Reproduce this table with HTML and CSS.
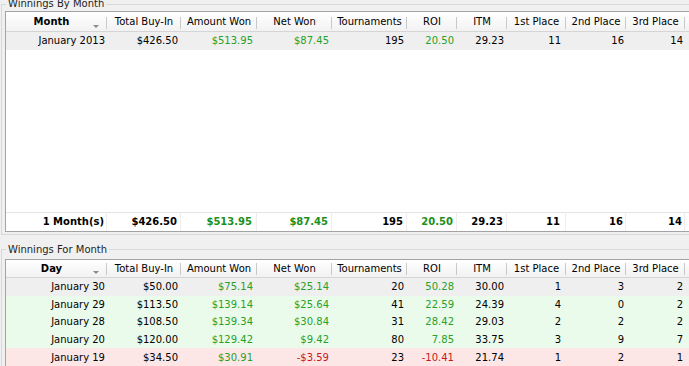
FILE: index.html
```html
<!DOCTYPE html>
<html>
<head>
<meta charset="utf-8">
<link rel="stylesheet" href="styles.css">
</head>
<body>
<div class="page">
  <section class="group g1">
    <div class="caption">Winnings By Month</div>
    <div class="grid">
      <table>
        <colgroup>
          <col class="c1"><col class="c2"><col class="c3"><col class="c4"><col class="c5"><col class="c6"><col class="c7"><col class="c8"><col class="c9"><col class="c10"><col class="c11">
        </colgroup>
        <thead>
          <tr>
            <th class="sorted"><span class="arrow"></span>Month</th>
            <th>Total Buy-In</th><th>Amount Won</th><th>Net Won</th><th>Tournaments</th><th>ROI</th><th>ITM</th><th>1st Place</th><th>2nd Place</th><th>3rd Place</th><th class="last"></th>
          </tr>
        </thead>
        <tbody>
          <tr class="row focus">
            <td class="p1">January 2013</td><td class="p2">$426.50</td><td class="p3 pos">$513.95</td><td class="p4 pos">$87.45</td><td class="p5">195</td><td class="p6 pos">20.50</td><td class="p7">29.23</td><td class="p8">11</td><td class="p9">16</td><td class="p10">14</td><td></td>
          </tr>
          <tr class="filler"><td colspan="11"></td></tr>
        </tbody>
        <tfoot>
          <tr class="total">
            <td class="p1">1 Month(s)</td><td class="p2">$426.50</td><td class="p3 pos">$513.95</td><td class="p4 pos">$87.45</td><td class="p5">195</td><td class="p6 pos">20.50</td><td class="p7">29.23</td><td class="p8">11</td><td class="p9">16</td><td class="p10">14</td><td></td>
          </tr>
        </tfoot>
      </table>
    </div>
  </section>

  <section class="group g2">
    <div class="caption">Winnings For Month</div>
    <div class="grid">
      <table>
        <colgroup>
          <col class="c1"><col class="c2"><col class="c3"><col class="c4"><col class="c5"><col class="c6"><col class="c7"><col class="c8"><col class="c9"><col class="c10"><col class="c11">
        </colgroup>
        <thead>
          <tr>
            <th class="sorted"><span class="arrow"></span>Day</th>
            <th>Total Buy-In</th><th>Amount Won</th><th>Net Won</th><th>Tournaments</th><th>ROI</th><th>ITM</th><th>1st Place</th><th>2nd Place</th><th>3rd Place</th><th class="last"></th>
          </tr>
        </thead>
        <tbody>
          <tr class="row focus">
            <td class="p1">January 30</td><td class="p2">$50.00</td><td class="p3 pos">$75.14</td><td class="p4 pos">$25.14</td><td class="p5">20</td><td class="p6 pos">50.28</td><td class="p7">30.00</td><td class="p8">1</td><td class="p9">3</td><td class="p10">2</td><td></td>
          </tr>
          <tr class="row win">
            <td class="p1">January 29</td><td class="p2">$113.50</td><td class="p3 pos">$139.14</td><td class="p4 pos">$25.64</td><td class="p5">41</td><td class="p6 pos">22.59</td><td class="p7">24.39</td><td class="p8">4</td><td class="p9">0</td><td class="p10">2</td><td></td>
          </tr>
          <tr class="row win">
            <td class="p1">January 28</td><td class="p2">$108.50</td><td class="p3 pos">$139.34</td><td class="p4 pos">$30.84</td><td class="p5">31</td><td class="p6 pos">28.42</td><td class="p7">29.03</td><td class="p8">2</td><td class="p9">2</td><td class="p10">2</td><td></td>
          </tr>
          <tr class="row win">
            <td class="p1">January 20</td><td class="p2">$120.00</td><td class="p3 pos">$129.42</td><td class="p4 pos">$9.42</td><td class="p5">80</td><td class="p6 pos">7.85</td><td class="p7">33.75</td><td class="p8">3</td><td class="p9">9</td><td class="p10">7</td><td></td>
          </tr>
          <tr class="row loss">
            <td class="p1">January 19</td><td class="p2">$34.50</td><td class="p3 pos">$30.91</td><td class="p4 neg">-$3.59</td><td class="p5">23</td><td class="p6 neg">-10.41</td><td class="p7">21.74</td><td class="p8">1</td><td class="p9">2</td><td class="p10">1</td><td></td>
          </tr>
        </tbody>
      </table>
    </div>
  </section>
</div>
</body>
</html>
```

FILE: styles.css
```css
html, body {
  margin: 0;
  padding: 0;
}
body {
  background: #f0f0f0;
  font-family: "DejaVu Sans", Tahoma, sans-serif;
  font-size: 10px;
  color: #000;
  width: 689px;
  height: 366px;
  overflow: hidden;
}
.page {
  display: flex;
  flex-direction: column;
  padding-top: 4px;
}
.group {
  position: relative;
  margin-left: 1px;
  border-top: 1px solid #d9d9d9;
  border-left: 1px solid #d9d9d9;
}
.g1 {
  height: 229px;
  border-bottom: 1px solid #d9d9d9;
}
.g2 {
  margin-top: 14px;
  flex: 1;
}
.caption {
  position: absolute;
  left: 4px;
  top: -8px;
  padding: 0 2px;
  line-height: 13px;
  background: #f0f0f0;
  color: #1e1e1e;
}
.g2 .caption {
  top: -7px;
}
.grid {
  margin-left: 3px;
  width: 720px;
  border: 1px solid #a3a3a3;
  border-right: none;
  background: #fff;
}
.g1 .grid {
  margin-top: 6px;
}
.g2 .grid {
  margin-top: 9px;
}
table {
  border-collapse: separate;
  border-spacing: 0;
  table-layout: fixed;
  width: 720px;
}
.c1 { width: 101px; }
.c2 { width: 74px; }
.c3 { width: 76px; }
.c4 { width: 75px; }
.c5 { width: 75px; }
.c6 { width: 50px; }
.c7 { width: 50px; }
.c8 { width: 59px; }
.c9 { width: 60px; }
.c10 { width: 59px; }
.c11 { width: 41px; }

th {
  height: 19px;
  padding: 0;
  font-weight: normal;
  text-align: center;
  white-space: nowrap;
  overflow: hidden;
  border-bottom: 1px solid #d5d5d5;
  background:
    linear-gradient(#c9c9c9, #c9c9c9) no-repeat right 5px / 1px 12px,
    linear-gradient(#ffffff, #f2f2f2);
}
.g2 th {
  height: 17px;
  background:
    linear-gradient(#c9c9c9, #c9c9c9) no-repeat right 3px / 1px 12px,
    linear-gradient(#ffffff, #f2f2f2);
}
.g2 th.last,
th.last {
  background: linear-gradient(#ffffff, #f2f2f2);
}
th.sorted {
  font-weight: bold;
  padding-left: 4px;
}
.arrow {
  float: right;
  width: 0;
  height: 0;
  margin: 9px 8px 0 0;
  border-top: 3px solid #8a8a8a;
  border-left: 3px solid transparent;
  border-right: 3px solid transparent;
}
.g2 .arrow {
  margin-top: 8px;
}
td {
  padding: 0;
  text-align: right;
  white-space: nowrap;
  overflow: hidden;
}
.row td {
  height: 17.6px;
}
.focus td { background: #efefef; }
.win td { background: #ebfbeb; }
.loss td { background: #fde6e6; }
.filler td {
  height: 162px;
  background: #fff;
}
.total td {
  height: 18px;
  font-weight: bold;
  border-top: 1px solid #e4e4e4;
  border-right: 1px solid #eeeeee;
  background: #fff;
}
.p1 { padding-right: 2px; }
.p2 { padding-right: 3px; }
.p3 { padding-right: 4px; }
.p4 { padding-right: 3px; }
.p5 { padding-right: 3px; }
.p6 { padding-right: 3px; }
.p7 { padding-right: 3px; }
.p8 { padding-right: 5px; }
.p9 { padding-right: 2px; }
.p10 { padding-right: 2px; }
.pos { color: #27a127; }
.total .pos { color: #1a911a; }
.neg { color: #c41a1a; }
```
